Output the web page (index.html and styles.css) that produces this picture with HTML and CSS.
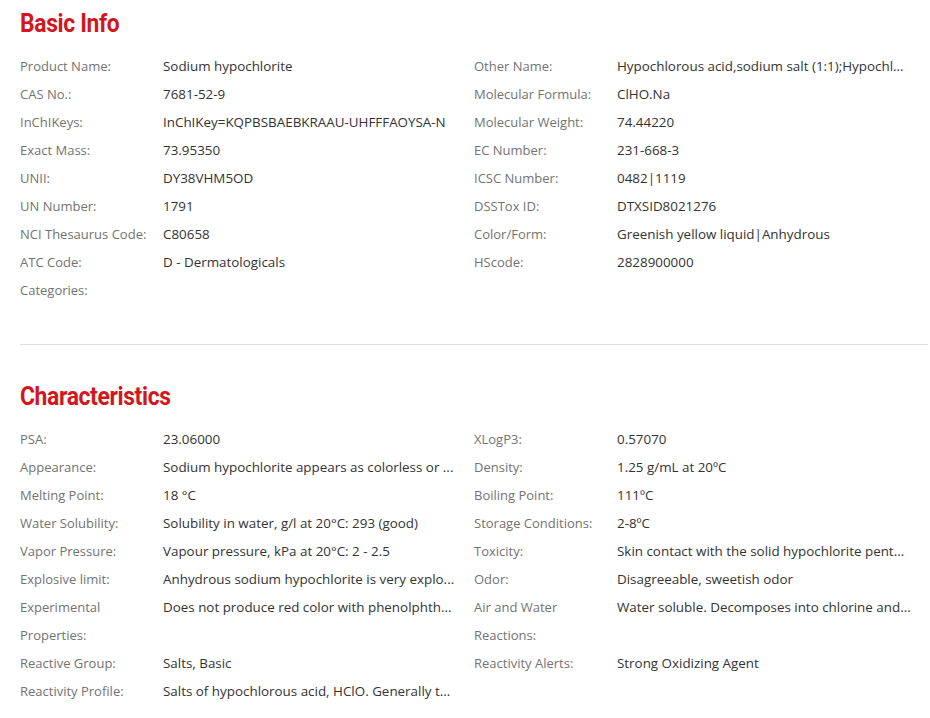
FILE: index.html
```html
<!DOCTYPE html>
<html>
<head>
<meta charset="utf-8">
<link rel="stylesheet" href="styles.css">
</head>
<body>
<div class="page">
  <section class="section">
    <h2 class="title">Basic Info</h2>
    <div class="grid">
      <div class="item"><span class="label">Product Name:</span><span class="value">Sodium hypochlorite</span></div>
      <div class="item"><span class="label">Other Name:</span><span class="value">Hypochlorous acid,sodium salt (1:1);Hypochl...</span></div>
      <div class="item"><span class="label">CAS No.:</span><span class="value">7681-52-9</span></div>
      <div class="item"><span class="label">Molecular Formula:</span><span class="value">ClHO.Na</span></div>
      <div class="item"><span class="label">InChIKeys:</span><span class="value">InChIKey=KQPBSBAEBKRAAU-UHFFFAOYSA-N</span></div>
      <div class="item"><span class="label">Molecular Weight:</span><span class="value">74.44220</span></div>
      <div class="item"><span class="label">Exact Mass:</span><span class="value">73.95350</span></div>
      <div class="item"><span class="label">EC Number:</span><span class="value">231-668-3</span></div>
      <div class="item"><span class="label">UNII:</span><span class="value">DY38VHM5OD</span></div>
      <div class="item"><span class="label">ICSC Number:</span><span class="value">0482|1119</span></div>
      <div class="item"><span class="label">UN Number:</span><span class="value">1791</span></div>
      <div class="item"><span class="label">DSSTox ID:</span><span class="value">DTXSID8021276</span></div>
      <div class="item"><span class="label">NCI Thesaurus Code:</span><span class="value">C80658</span></div>
      <div class="item"><span class="label">Color/Form:</span><span class="value">Greenish yellow liquid|Anhydrous</span></div>
      <div class="item"><span class="label">ATC Code:</span><span class="value">D - Dermatologicals</span></div>
      <div class="item"><span class="label">HScode:</span><span class="value">2828900000</span></div>
      <div class="item"><span class="label">Categories:</span><span class="value"></span></div>
    </div>
  </section>
  <hr class="divider">
  <section class="section">
    <h2 class="title">Characteristics</h2>
    <div class="grid">
      <div class="item"><span class="label">PSA:</span><span class="value">23.06000</span></div>
      <div class="item"><span class="label">XLogP3:</span><span class="value">0.57070</span></div>
      <div class="item"><span class="label">Appearance:</span><span class="value">Sodium hypochlorite appears as colorless or ...</span></div>
      <div class="item"><span class="label">Density:</span><span class="value">1.25 g/mL at 20ºC</span></div>
      <div class="item"><span class="label">Melting Point:</span><span class="value">18 °C</span></div>
      <div class="item"><span class="label">Boiling Point:</span><span class="value">111ºC</span></div>
      <div class="item"><span class="label">Water Solubility:</span><span class="value">Solubility in water, g/l at 20°C: 293 (good)</span></div>
      <div class="item"><span class="label">Storage Conditions:</span><span class="value">2-8ºC</span></div>
      <div class="item"><span class="label">Vapor Pressure:</span><span class="value">Vapour pressure, kPa at 20°C: 2 - 2.5</span></div>
      <div class="item"><span class="label">Toxicity:</span><span class="value">Skin contact with the solid hypochlorite pent...</span></div>
      <div class="item"><span class="label">Explosive limit:</span><span class="value">Anhydrous sodium hypochlorite is very explo...</span></div>
      <div class="item"><span class="label">Odor:</span><span class="value">Disagreeable, sweetish odor</span></div>
      <div class="item"><span class="label">Experimental Properties:</span><span class="value">Does not produce red color with phenolphth...</span></div>
      <div class="item"><span class="label">Air and Water Reactions:</span><span class="value">Water soluble. Decomposes into chlorine and...</span></div>
      <div class="item"><span class="label">Reactive Group:</span><span class="value">Salts, Basic</span></div>
      <div class="item"><span class="label">Reactivity Alerts:</span><span class="value">Strong Oxidizing Agent</span></div>
      <div class="item"><span class="label">Reactivity Profile:</span><span class="value">Salts of hypochlorous acid, HClO. Generally t...</span></div>
    </div>
  </section>
</div>
</body>
</html>
```

FILE: styles.css
```css
html, body {
  margin: 0;
  padding: 0;
  background: #ffffff;
}
.page {
  padding: 8px 0 0 20px;
  width: 908px;
  font-family: "Open Sans", "Noto Sans", sans-serif;
  font-size: 13px;
  color: #333333;
}
.title {
  margin: 0 0 14px 0;
  font-family: Roboto, "Liberation Sans", sans-serif;
  font-weight: 700;
  font-size: 26px;
  line-height: 30px;
  color: #d4161c;
  letter-spacing: -0.4px;
  transform: scaleX(0.88);
  transform-origin: left center;
}
.grid {
  display: grid;
  grid-template-columns: 454px 454px;
}
.item {
  display: flex;
  line-height: 28px;
  min-width: 0;
}
.label {
  flex: 0 0 143px;
  color: #737373;
}
.value {
  flex: 1 1 auto;
  min-width: 0;
  font-size: 13.4px;
  white-space: nowrap;
  overflow: hidden;
  text-overflow: ellipsis;
  color: #333333;
}
.divider {
  border: 0;
  border-top: 1px solid #dddddd;
  margin: 40px 0 36px 0;
}
```
